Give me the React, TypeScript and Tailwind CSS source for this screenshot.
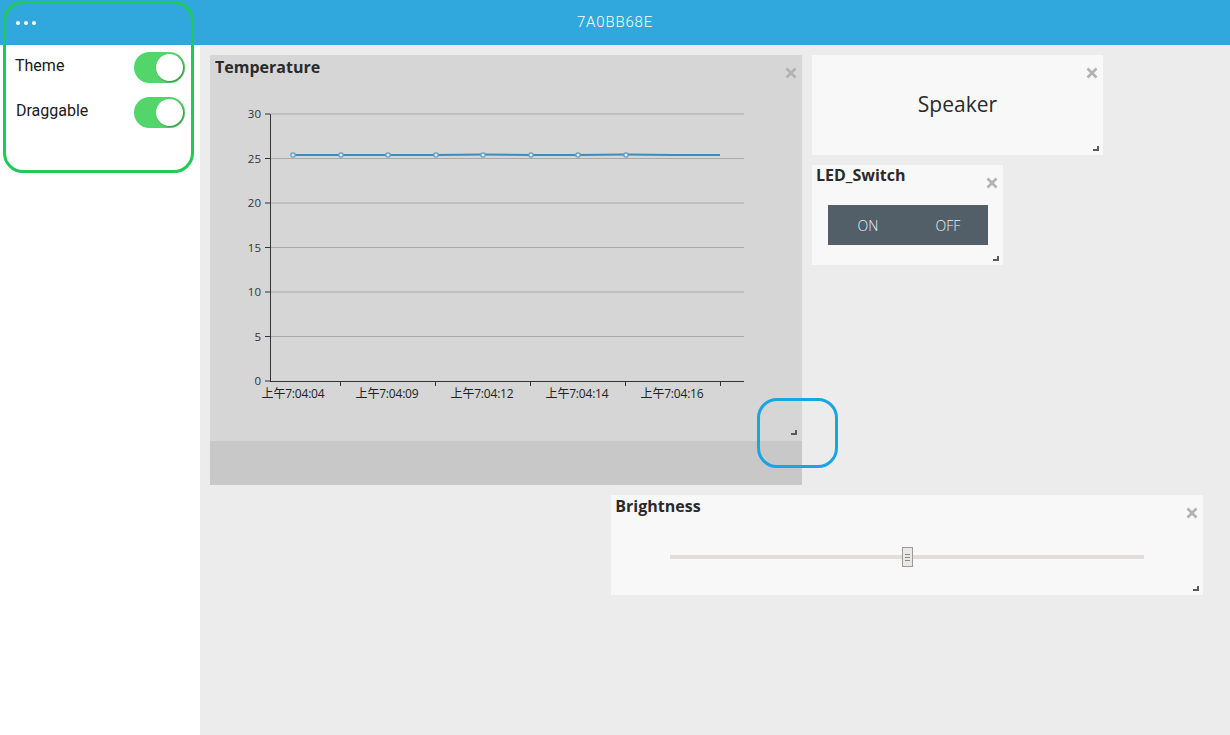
import React from "react";

/* ─── Small pieces ───────────────────────────────────────────────────────── */
function Toggle() {
  return (
    <div className="flex h-[31px] w-[51px] items-center justify-end rounded-full bg-[#52d66a] p-[2px]">
      <div className="h-[27px] w-[27px] rounded-full bg-white shadow-[1px_1px_2px_rgba(0,0,0,0.35)]" />
    </div>
  );
}

function CloseX() {
  return (
    <svg
      className="absolute right-[5px] top-[12px]"
      width="12"
      height="12"
      viewBox="0 0 12 12"
      aria-hidden="true"
    >
      <path d="M1.5 1.5 L10.5 10.5 M10.5 1.5 L1.5 10.5" stroke="#b2b2b2" strokeWidth="2.6" />
    </svg>
  );
}

function ResizeHandle({ className }: { className: string }) {
  return <div className={`absolute h-[5px] w-[6px] border-b-2 border-r-2 border-[#5a5a5a] ${className}`} />;
}

/* ─── Temperature chart ──────────────────────────────────────────────────── */
const yTicks = [30, 25, 20, 15, 10, 5, 0];
const xLabels = [
  { x: 83, t: "上午7:04:04" },
  { x: 177, t: "上午7:04:09" },
  { x: 272, t: "上午7:04:12" },
  { x: 367, t: "上午7:04:14" },
  { x: 462, t: "上午7:04:16" },
];
const points = [83, 131, 178, 226, 273, 321, 368, 416];

function TemperatureChart() {
  const yOf = (i: number) => 33 + i * 44.5;
  return (
    <svg width="592" height="360" viewBox="0 0 592 360" className="block">
      {yTicks.map((v, i) => (
        <g key={v}>
          {i < 6 && <line x1="60" x2="534" y1={yOf(i)} y2={yOf(i)} stroke="#a9a9a9" strokeWidth="1" />}
          <line x1="55" x2="60" y1={yOf(i)} y2={yOf(i)} stroke="#333" strokeWidth="1" />
          <text
            x="51"
            y={yOf(i) + 4}
            textAnchor="end"
            fontSize="11.5"
            fill="#333"
            fontFamily="'Open Sans', 'Liberation Sans', sans-serif"
          >
            {v}
          </text>
        </g>
      ))}
      <line x1="60.5" x2="60.5" y1="33" y2="300" stroke="#333" strokeWidth="1" />
      <line x1="60" x2="534" y1="300.5" y2="300.5" stroke="#333" strokeWidth="1" />
      {[130, 225, 320, 415, 510].map((x) => (
        <line key={x} x1={x + 0.5} x2={x + 0.5} y1="300" y2="305" stroke="#333" strokeWidth="1" />
      ))}
      {xLabels.map((l) => (
        <text
          key={l.t}
          x={l.x}
          y="317"
          textAnchor="middle"
          fontSize="12"
          fill="#222"
          fontFamily="'Open Sans', 'Noto Sans CJK SC', sans-serif"
          letterSpacing="-0.2"
        >
          {l.t}
        </text>
      ))}
      <polyline
        points="83,74 131,74 178,74 226,74 273,73.5 321,74 368,74 416,73.5 463,74 510,74"
        fill="none"
        stroke="#3c8cbc"
        strokeWidth="2"
      />
      {points.map((x) => (
        <circle key={x} cx={x} cy="74" r="2.2" fill="#dbe8ee" stroke="#5d9fc4" strokeWidth="1.2" />
      ))}
    </svg>
  );
}

/* ─── App ────────────────────────────────────────────────────────────────── */
export default function App() {
  return (
    <div className="relative flex h-[735px] w-[1230px] flex-col overflow-hidden bg-[#ececec] font-['Roboto','Liberation_Sans',sans-serif]">
      {/* Header */}
      <header className="flex h-[45px] shrink-0 items-center bg-[#30a8de] px-[15px]">
        <div className="flex w-[40px] items-center gap-[4px] pl-[1px]">
          <span className="h-[4px] w-[4px] rounded-full bg-white" />
          <span className="h-[4px] w-[4px] rounded-full bg-white" />
          <span className="h-[4px] w-[4px] rounded-full bg-white" />
        </div>
        <h1 className="flex-1 pr-[40px] text-center text-[15px] font-light tracking-[0.8px] text-white">
          7A0BB68E
        </h1>
      </header>

      <div className="flex flex-1">
        {/* Sidebar */}
        <aside className="w-[200px] shrink-0 bg-white">
          <div className="flex h-[45px] items-center justify-between pl-[15px] pr-[15px]">
            <span className="-mt-[4px] text-[16px] text-[#1a1a1a]">Theme</span>
            <Toggle />
          </div>
          <div className="flex h-[45px] items-center justify-between pl-[16px] pr-[15px]">
            <span className="-mt-[4px] text-[16px] text-[#1a1a1a]">Draggable</span>
            <Toggle />
          </div>
        </aside>

        {/* Widget grid */}
        <main className="grid flex-1 grid-cols-[repeat(10,90.33px)] grid-rows-[repeat(5,100px)] content-start gap-x-[10px] gap-y-[10px] pl-[10px] pt-[10px] font-['Open_Sans','Liberation_Sans',sans-serif]">
          {/* Temperature */}
          <section className="relative col-[1/span_6] row-[1/span_4] flex w-[592px] flex-col bg-[#c8c8c8]">
            <div className="relative flex h-[386px] flex-col bg-[#d6d6d6]">
              <h2 className="h-[26px] pl-[5px] text-[16px] font-bold text-[#2a2a2a]">Temperature</h2>
              <TemperatureChart />
              <CloseX />
              <ResizeHandle className="bottom-[6px] right-[5px]" />
            </div>
          </section>

          {/* Speaker */}
          <section className="relative col-[7/span_3] row-[1/span_1] flex items-center justify-center bg-[#f8f8f8]">
            <span className="text-[21px] text-[#2a2a2a]">Speaker</span>
            <CloseX />
            <ResizeHandle className="bottom-[4px] right-[4px]" />
          </section>

          {/* LED switch */}
          <section className="relative col-[7/span_2] row-[2/span_1] flex flex-col bg-[#f8f8f8]">
            <h2 className="-mt-[2px] h-[42px] pl-[4px] text-[16px] font-bold text-[#2a2a2a]">LED_Switch</h2>
            <div className="ml-[16px] flex h-[40px] w-[160px] bg-[#535f68] text-[14px] font-light text-[#eef0f1]">
              <span className="flex flex-1 items-center justify-center">ON</span>
              <span className="flex flex-1 items-center justify-center">OFF</span>
            </div>
            <CloseX />
            <ResizeHandle className="bottom-[4px] right-[4px]" />
          </section>

          {/* Brightness */}
          <section className="relative col-[5/span_6] row-[5/span_1] flex flex-col bg-[#f8f8f8]">
            <h2 className="-mt-[1px] h-[53px] pl-[4px] text-[16px] font-bold text-[#2a2a2a]">Brightness</h2>
            <div className="relative ml-[59px] flex h-[20px] w-[474px] items-center">
              <div className="h-[4px] w-full bg-[#e2ddd8]" />
              <div className="absolute left-[232px] top-0 flex h-[20px] w-[11px] flex-col items-center justify-center gap-[2px] border border-[#9a9a9a] bg-[#ebe8e3]">
                <span className="h-px w-[5px] bg-[#8a8a8a]" />
                <span className="h-px w-[5px] bg-[#8a8a8a]" />
                <span className="h-px w-[5px] bg-[#8a8a8a]" />
              </div>
            </div>
            <CloseX />
            <ResizeHandle className="bottom-[4px] right-[4px]" />
          </section>
        </main>
      </div>

      {/* Annotation outlines */}
      <div className="pointer-events-none absolute left-[3px] top-[1px] h-[172px] w-[191px] rounded-[20px] border-[3px] border-[#1fca55]" />
      <div className="pointer-events-none absolute left-[757px] top-[398px] h-[70px] w-[81px] rounded-[20px] border-[3px] border-[#19a5e2]" />
    </div>
  );
}
